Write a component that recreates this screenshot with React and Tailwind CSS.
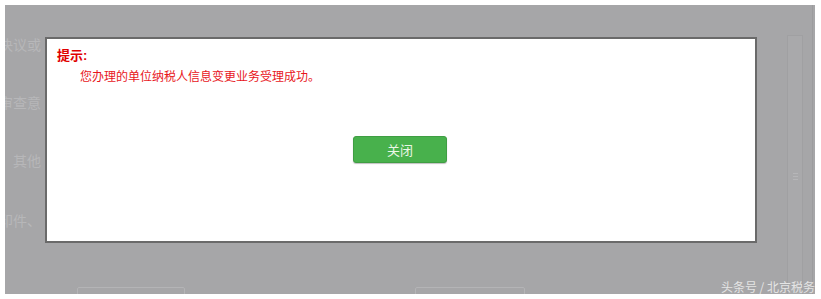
export default function App() {
  const cjk = { fontFamily: '"Noto Sans CJK SC", "Liberation Sans", sans-serif' };
  const song = { fontFamily: '"Liberation Sans", "Noto Sans CJK SC", sans-serif' };

  return (
    <div className="w-[821px] h-[299px] bg-white pl-[5px] pt-[5px]" style={cjk}>
      <div className="relative w-[810px] h-[289px] bg-[#a6a6a8] overflow-hidden">
        {/* dimmed page behind the dialog, clipped at the dialog's left edge */}
        <div className="w-[40px] overflow-hidden">
          <div className="flex flex-col text-[14px] leading-[16px] text-[#b7b7b9] -ml-[6px] whitespace-nowrap">
            <div className="mt-[31px]">决议或</div>
            <div className="mt-[42px]">审查意</div>
            <div className="mt-[42px]">、其他</div>
            <div className="mt-[44px]">印件、</div>
          </div>
        </div>

        <div className="absolute left-[72px] top-[282px] w-[108px] h-[14px] border border-[#b4b4b6] rounded-[2px]" />
        <div className="absolute left-[410px] top-[282px] w-[110px] h-[14px] border border-[#b4b4b6] rounded-[2px]" />

        {/* scrollbar */}
        <div className="absolute left-[782px] top-[30px] w-[16px] h-[262px] border border-[#a0a0a2] bg-[#a9a9ab] flex flex-col items-center justify-center">
          <div className="flex flex-col gap-[2px] mt-[20px]">
            <div className="w-[5px] h-px bg-[#b6b6b8]" />
            <div className="w-[5px] h-px bg-[#b6b6b8]" />
            <div className="w-[5px] h-px bg-[#b6b6b8]" />
          </div>
        </div>
        <div className="absolute right-[2px] top-0 w-px h-full bg-[#9c9c9e]" />

        {/* dialog */}
        <div className="absolute left-[40px] top-[32px] w-[712px] h-[206px] bg-white border-2 border-[#6a6a6a] flex flex-col">
          <div className="pl-[10px] pt-[9px] text-[13px] leading-[16px] font-bold text-[#e00000]" style={song}>
            提示:
          </div>
          <div className="pl-[33px] pt-[4px] text-[12px] leading-[16px] text-[#e8161c]">
            您办理的单位纳税人信息变更业务受理成功。
          </div>
          <div className="flex justify-center mt-[52px] ml-[-2px]">
            <button className="w-[94px] h-[27px] rounded-[3px] bg-[#48b14c] border border-[#3f9e43] shadow-[0_1px_1px_rgba(0,0,0,0.25)] text-[13px] text-[#eaf7e6]">
              关闭
            </button>
          </div>
        </div>

        <div className="absolute right-[0px] bottom-[0px] text-[12px] leading-[14px] text-[#e4e4e4] whitespace-nowrap">
          头条号 / 北京税务
        </div>
      </div>
    </div>
  );
}
